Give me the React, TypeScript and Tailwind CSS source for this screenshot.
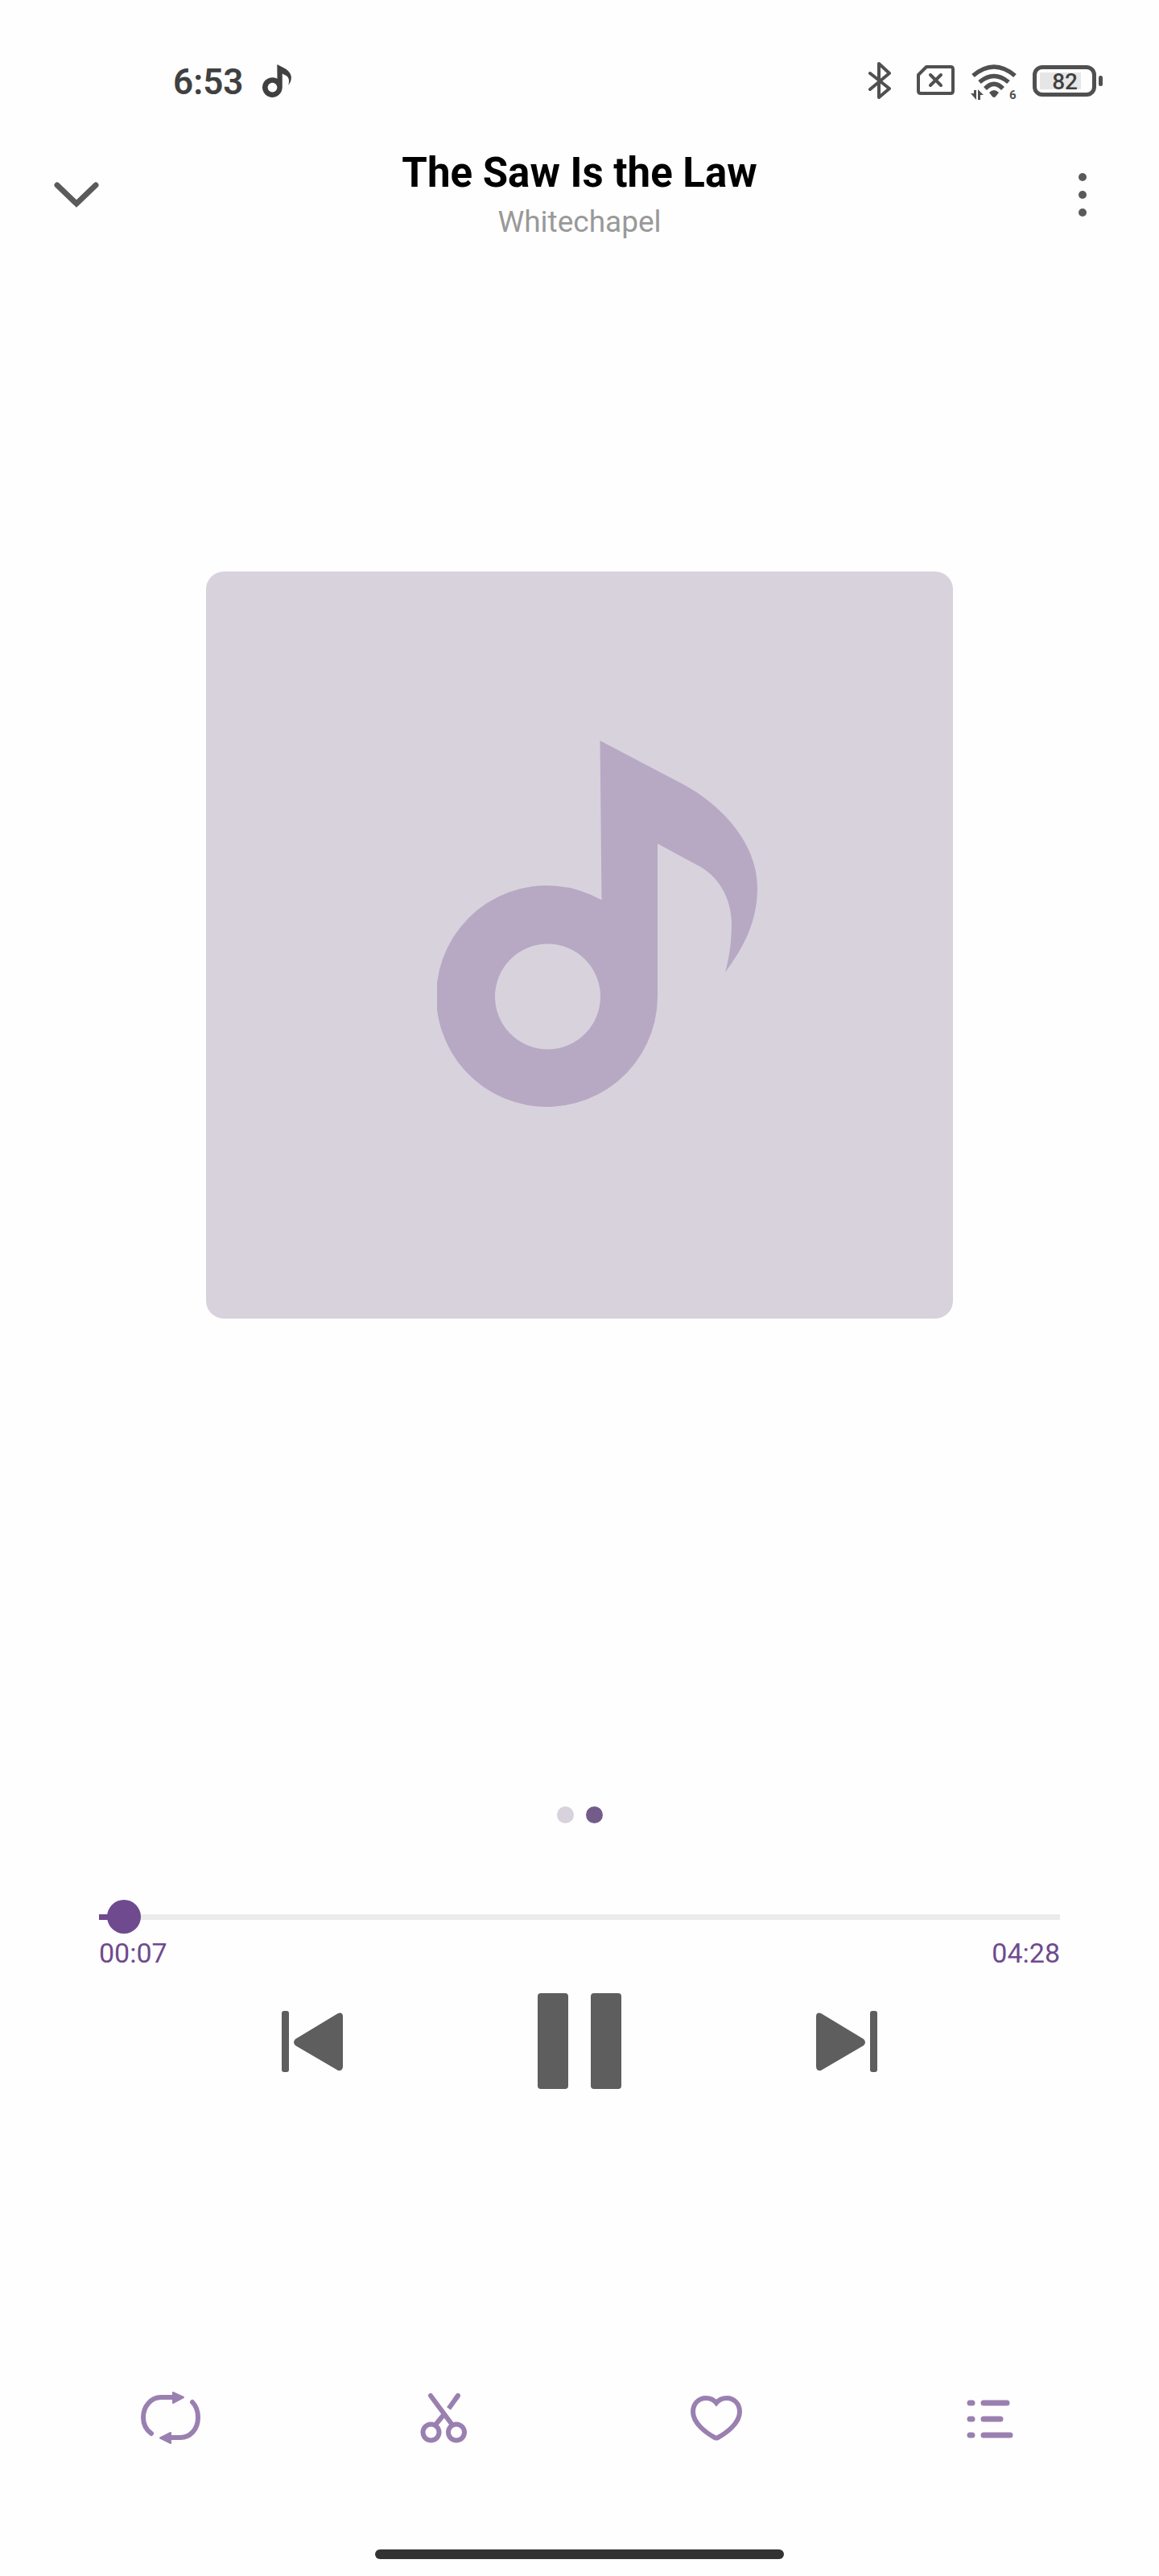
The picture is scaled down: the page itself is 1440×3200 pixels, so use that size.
import { useState } from 'react'
import type { ReactNode } from 'react'

const song = { title: 'The Saw Is the Law', artist: 'Whitechapel', duration: 268 }

const formatTime = (s: number) => {
  const min = Math.floor(s / 60)
  const second = s % 60
  return String(min).padStart(2, '0') + ':' + String(second).padStart(2, '0')
}

// music note, shared by the status bar and the cover
const Note = ({ className }: { className: string }) => (
  <svg viewBox="0 0 398 456" className={className} fill="currentColor" aria-hidden="true">
    <path fillRule="evenodd" d="M202.500 0L309 56C360 85 398 132 398 183C398 226 380 258 358 288C364 266 366 247 366 226C365 194 349 167 322 154L274 128V318A137.500 137.500 0 1 1 204.500 198Z M137.500 252.500a65.500 65.500 0 1 0 0 131a65.500 65.500 0 1 0 0 -131Z" />
  </svg>
)

const StatusBar = () => (
  <div className="flex h-[160px] items-start justify-between pr-[70px] pl-[215px] pt-[76px] text-[#404040]">
    <div className="flex h-12 items-center gap-6">
      <span className="pt-[3px] text-[44px] leading-[52px] font-semibold">6:53</span>
      <Note className="h-[41px] w-9" />
    </div>
    <div className="flex h-12 items-center text-[#505050]">
      <svg width="30" height="48" viewBox="0 0 30 48" fill="none" stroke="currentColor" strokeWidth="4" strokeLinecap="round" strokeLinejoin="round" aria-label="Bluetooth">
        <path d="M2 15L26 34L13 45V3L26 15L2 35" />
      </svg>
      <svg className="ml-[29px]" width="50" height="48" viewBox="0 0 50 48" fill="none" stroke="currentColor" strokeWidth="4" strokeLinecap="round" strokeLinejoin="round" aria-label="No SIM">
        <path d="M13 7H43Q46 7 46 10V37Q46 40 43 40H6Q3 40 3 37V17Z" />
        <path d="M18 17L31 30M31 17L18 30" />
      </svg>
      <svg className="ml-[17px]" width="60" height="56" viewBox="0 -4 60 56" fill="none" stroke="currentColor" strokeWidth="5.500" aria-label="Wi-Fi 6">
        <path d="M4 18Q30 -4 56 18M12 26Q30 11 48 26M19 34Q30 23 41 34" strokeLinecap="butt" />
        <path d="M24 39Q30 33 36 39L32 44Q30 46 28 44Z" fill="currentColor" stroke="none" />
        <path d="M1 40H5V36H8V48ZM10 48V35L17 42H13V48Z" fill="currentColor" stroke="none" />
        <text x="49" y="47" fontSize="15" fontWeight="700" fill="currentColor" stroke="none">6</text>
      </svg>
      <div className="ml-[18px] flex items-center gap-[3px]">
        <div className="h-[39px] w-[79px] rounded-xl border-5 border-current p-1">
          <div className="flex h-full w-[51px] items-center justify-end bg-[#e6e6e6] pt-1 pr-1 text-[28px] font-medium text-[#404040]">82</div>
        </div>
        <div className="h-[13px] w-[5px] rounded-sm bg-current" />
      </div>
    </div>
  </div>
)

const Header = () => (
  <header className="flex items-center justify-between px-[60px] text-[#5a5a5a]">
    <button type="button" aria-label="Close player" className="flex size-[70px] items-center justify-center">
      <svg width="60" height="36" viewBox="0 0 60 36" fill="none" stroke="currentColor" strokeWidth="7" strokeLinecap="round">
        <path d="M6 6L30 29L54 6" />
      </svg>
    </button>
    <div className="pt-1 text-center">
      <h1 className="text-[51px] leading-[64px] font-bold text-black">{song.title}</h1>
      <p className="text-[37px] leading-[58px] text-[#999999]">{song.artist}</p>
    </div>
    <button type="button" aria-label="More options" className="flex size-[70px] flex-col items-center justify-center gap-3">
      <span className="size-[10px] rounded-full bg-current" />
      <span className="size-[10px] rounded-full bg-current" />
      <span className="size-[10px] rounded-full bg-current" />
    </button>
  </header>
)

const Seekbar = ({ time, onChange }: { time: number, onChange: (t: number) => void }) => (
  <div className="px-[123px]">
    <div className="relative flex h-[42px] items-center">
      <div className="h-[7px] w-full bg-[#ebebeb]">
        <div className="h-full bg-[#6f4a8e]" style={{ width: `${time / song.duration * 100}%` }} />
      </div>
      <input
        type="range"
        aria-label="Seek"
        min={0}
        max={song.duration}
        value={time}
        onChange={e => onChange(Number(e.target.value))}
        className="absolute inset-y-0 -right-[21px] -left-[21px] appearance-none bg-transparent [&::-webkit-slider-thumb]:size-[42px] [&::-webkit-slider-thumb]:appearance-none [&::-webkit-slider-thumb]:rounded-full [&::-webkit-slider-thumb]:bg-[#6f4a8e]"
      />
    </div>
    <div className="flex justify-between text-[34px] leading-[48px] text-[#6f4a8e]">
      <span>{formatTime(time)}</span>
      <span>{formatTime(song.duration)}</span>
    </div>
  </div>
)

const SkipIcon = ({ className }: { className?: string }) => (
  <svg className={className} width="76" height="76" viewBox="0 0 76 76" fill="currentColor">
    <rect width="9" height="76" rx="3" />
    <path d="M17 35L70 3Q76 1 76 7V69Q76 75 70 74L17 43Q13 39 17 35Z" />
  </svg>
)

const Controls = () => {
  const [playing, setPlaying] = useState(true)
  return (
    <div className="flex items-center justify-between px-[350px] text-[#5e5e5e]">
      <button type="button" aria-label="Previous"><SkipIcon /></button>
      <button type="button" aria-label={playing ? 'Pause' : 'Play'} onClick={() => setPlaying(!playing)}>
        <svg width="104" height="119" viewBox="0 0 104 119" fill="currentColor">
          {playing
            ? <><rect width="38" height="119" rx="4" /><rect x="66" width="38" height="119" rx="4" /></>
            : <path d="M8 2L100 56Q104 60 100 63L8 117Q4 118 4 113V6Q4 1 8 2Z" />}
        </svg>
      </button>
      <button type="button" aria-label="Next"><SkipIcon className="-scale-x-100" /></button>
    </div>
  )
}

const Tool = ({ label, children }: { label: string, children: ReactNode }) => (
  <button type="button" aria-label={label} className="flex items-center justify-center">
    <svg width="80" height="80" viewBox="0 0 80 80" fill="none" stroke="currentColor" strokeWidth="6" strokeLinecap="round">
      {children}
    </svg>
  </button>
)

const Toolbar = () => (
  <nav className="grid grid-cols-4 px-[42px] text-[#9a80b0]">
    <Tool label="Repeat">
      <path d="M16 58C9 53 6 47 6 38C6 24 16 13 28 13H44M67 19C72 24 74 31 74 38C74 53 64 63 52 63H40" />
      <path d="M43 7L56 13L43 20ZM40 57L27 63.500L40 70Z" fill="currentColor" strokeWidth="2" strokeLinejoin="round" />
    </Tool>
    <Tool label="Cut">
      <circle cx="24.500" cy="56.500" r="10" />
      <circle cx="56" cy="56.500" r="10" />
      <path d="M24 11L50 46M31 46L40 35M58 11L55 15" />
      <path d="M58 11L46.500 27" strokeLinecap="butt" />
    </Tool>
    <Tool label="Favorite">
      <path d="M40 20C36 15 32 14 27 14C18 14 11 21 11 31C11 45 27 57 38 63Q40 64 42 63C53 57 69 45 69 31C69 21 62 14 53 14C48 14 44 15 40 20Z" />
    </Tool>
    <Tool label="Playlist">
      <path d="M16 20H19M33 20H62M16 40H19M33 40H54M16 60H19M33 60H66" strokeWidth="7" />
    </Tool>
  </nav>
)

export default function App() {
  const [time, setTime] = useState(7)
  return (
    <div className="flex min-h-screen flex-col bg-[#fefefe] font-['Roboto',sans-serif]">
      <StatusBar />
      <div className="pt-[19px]"><Header /></div>
      <main className="flex flex-1 flex-col">
        <div className="px-64 pt-[405px]">
          <div className="flex aspect-square items-start justify-center rounded-[22px] bg-[#d8d2dd] pt-[210px] pl-11 text-[#b7a9c4]">
            <Note className="w-[398px]" />
          </div>
        </div>
        <div className="mt-[606px] flex justify-center gap-[15px]">
          <span className="size-[21px] rounded-full bg-[#d8d2dd]" />
          <span className="size-[21px] rounded-full bg-[#745c8a]" />
        </div>
        <div className="mt-[95px]"><Seekbar time={time} onChange={setTime} /></div>
        <div className="mt-[26px]"><Controls /></div>
      </main>
      <Toolbar />
      <div className="flex justify-center pt-[122px] pb-[21px]">
        <div className="h-3 w-[508px] rounded-full bg-[#333333]" />
      </div>
    </div>
  )
}
